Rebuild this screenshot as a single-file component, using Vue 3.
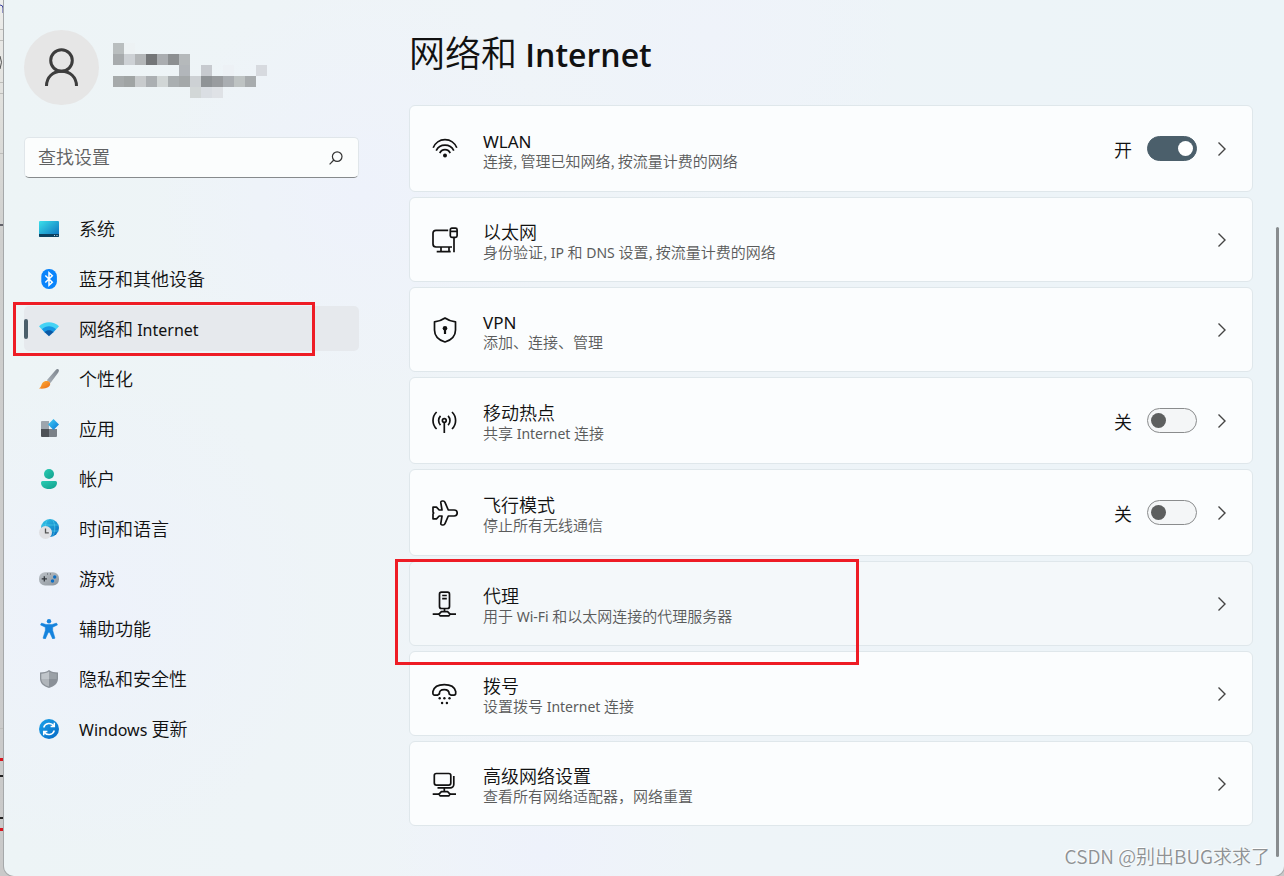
<script setup>
import { ref } from 'vue'

const query = ref('')

// Latin runs are set one step smaller than the Chinese text around them
const runs = (text) =>
  text
    .split(/( ?[A-Za-z-]+ ?)/)
    .filter((t) => t)
    .map((t) => ({ text: t, latin: /[A-Za-z]/.test(t) }))

const nav = [
  { id: 'system', label: '系统' },
  { id: 'bluetooth', label: '蓝牙和其他设备' },
  { id: 'network', label: '网络和 Internet', current: true },
  { id: 'personal', label: '个性化' },
  { id: 'apps', label: '应用' },
  { id: 'accounts', label: '帐户' },
  { id: 'time', label: '时间和语言' },
  { id: 'gaming', label: '游戏' },
  { id: 'access', label: '辅助功能' },
  { id: 'privacy', label: '隐私和安全性' },
  { id: 'update', label: 'Windows 更新' },
]

const cards = ref([
  { id: 'wlan', title: 'WLAN', sub: '连接, 管理已知网络, 按流量计费的网络', toggle: true, on: true },
  { id: 'ethernet', title: '以太网', sub: '身份验证, IP 和 DNS 设置, 按流量计费的网络' },
  { id: 'vpn', title: 'VPN', sub: '添加、连接、管理' },
  { id: 'hotspot', title: '移动热点', sub: '共享 Internet 连接', toggle: true, on: false },
  { id: 'airplane', title: '飞行模式', sub: '停止所有无线通信', toggle: true, on: false },
  { id: 'proxy', title: '代理', sub: '用于 Wi-Fi 和以太网连接的代理服务器', marked: true },
  { id: 'dialup', title: '拨号', sub: '设置拨号 Internet 连接' },
  { id: 'advanced', title: '高级网络设置', sub: '查看所有网络适配器，网络重置' },
])

const icons = {
  wlan: '<path d="M1.2 11.8A12.6 12.6 0 0 1 24.8 11.8M4.2 14.6A9.8 9.8 0 0 1 21.8 14.6M7.8 17.1A5.6 5.6 0 0 1 18.2 17.1"/><circle cx="13" cy="19.4" r="2" fill="currentColor" stroke="none"/>',
  ethernet: '<path d="M16.2 3.3H4A3 3 0 0 0 1 6.3V17a3 3 0 0 0 3 3h16M9 20v4.6M17 20v4.6M4.7 24.7h14M22 10.3v15"/><rect x="18.3" y="1.2" width="6.8" height="9.1" rx="1.6"/><path d="M18.3 4.4h6.8"/>',
  vpn: '<path d="M13 1c3 2.2 6.4 3.4 10.5 3.8v8.1c0 5.5-3.7 9.9-10.5 12.1C6.200 22.800 2.500 18.400 2.500 12.900V4.800C6.600 4.400 10 3.200 13 1z"/><circle cx="13" cy="11.300" r="2.300" fill="currentColor" stroke="none"/><path d="M13 11.500v5.500" stroke-width="2.200"/>',
  hotspot: '<circle cx="12.300" cy="12.500" r="1.900"/><path d="M12.300 14.500V25M8.500 7.800c-2.500 2.600-2.500 6.800 0 9.400M16.100 7.800c2.500 2.600 2.500 6.800 0 9.400M4.600 4c-4.800 4.700-4.800 12.300 0 17M20 4c4.800 4.700 4.800 12.300 0 17"/>',
  airplane: '<path d="M10.300 1h.9c.8 0 1.400.4 1.700 1.200L16.300 10h5.900c1.800 0 3 1.300 3 3s-1.200 3-3 3h-5.900l-3.400 7.800c-.3.800-.9 1.200-1.700 1.200h-.9c-1 0-1.600-.8-1.500-1.700L10 16H7.200l-2.700 2.800H1V14l.6-1L1 12V7.200h3.500L7.200 10H10L8.800 2.700C8.700 1.800 9.300 1 10.300 1z"/>',
  proxy: '<rect x="7.500" y="1.200" width="10" height="16.300" rx="2"/><path d="M10.200 4.500h4.600M10.200 7.700h4.600M12.500 17.500v3M.7 23.200h6.300M18 23.200h6"/><path d="M7 23.200l2.400-2.500h6.200l2.400 2.500-1.300 1.700H8.300z"/>',
  dialup: '<path d="M6.700 13.200l-1 .9H2.600C1.500 14.100.9 13.300.9 12.200V10.500C2 6 6.500 3.700 12.300 3.700S22.600 6 23.700 10.500v1.700c0 1.100-.6 1.900-1.700 1.900h-3.100l-1.700-1c0-3-1-4.500-4.900-4.500s-4.900 1.500-4.900 4.500z"/><g fill="currentColor" stroke="none"><circle cx="7.700" cy="17.200" r="1.200"/><circle cx="12.400" cy="17.200" r="1.200"/><circle cx="17.500" cy="17.200" r="1.200"/><circle cx="10.100" cy="22" r="1.200"/><circle cx="14.900" cy="22" r="1.200"/></g>',
  advanced: '<rect x="2.300" y="2.500" width="16.500" height="11.600" rx="2"/><path d="M21.800 5v8.300a3.600 3.600 0 0 1-3.600 3.600H5.500M12.300 17v3.500M.7 23.200h6.300M18 23.200h6"/><path d="M7 23.200l2.400-2.500h6.200l2.400 2.500-1.300 1.700H8.300z"/>',
}

const navIcons = {
  system: '<defs><linearGradient id="gs" x2="1" y2="1"><stop stop-color="#3be0ea"/><stop offset="1" stop-color="#0b6cbd"/></linearGradient></defs><rect y="2" width="20" height="16" rx="1" fill="url(#gs)"/><path d="M0 15h20v2a1 1 0 0 1-1 1H1a1 1 0 0 1-1-1z" fill="#0b3f5e"/><path d="M15 16h1v1h-1zM17.500 16h1v1h-1z" fill="#b9dcec"/>',
  bluetooth: '<rect x="2.300" width="15.600" height="20" rx="7.500" fill="#0a84fb"/><path d="M6.300 6.500l7 6.800-3.300 3V3.700l3.300 3-7 6.800" fill="none" stroke="#fff" stroke-width="1.500"/>',
  network: '<path d="M0 7.300C5.500 2 14.500 2 20 7.300L17.300 10.300H2.700z" fill="#45d3f5"/><path d="M2.900 10.200c4-3.900 10.200-3.900 14.200 0l-2.800 3.200H5.700z" fill="#1797e3"/><path d="M5.600 13.200c2.500-2.500 6.300-2.500 8.800 0L10 17.200z" fill="#0b59a5"/>',
  personal: '<defs><linearGradient id="gb" x1="1" x2="0" y2="1"><stop stop-color="#7d858e"/><stop offset="1" stop-color="#a9b0b8"/></linearGradient><linearGradient id="gp" x2="1" y2="1"><stop stop-color="#ffb43c"/><stop offset="1" stop-color="#ea6a12"/></linearGradient></defs><path d="M19.500.5c.8.800.4 2-.4 3.200L11.500 14 7.800 11.200 16.500 1.300C17.500.200 18.700-.3 19.500.500z" fill="url(#gb)"/><path d="M8 12c1.600-.2 3.200 1 3.200 2.800 0 3.400-4 5.400-11.200 4.700 2.500-1.500 2-3.500 3.200-5.300C4.200 12.600 6 12 8 12z" fill="url(#gp)"/>',
  apps: '<defs><linearGradient id="ga" x2="1" y2="1"><stop stop-color="#44cff5"/><stop offset="1" stop-color="#0676d6"/></linearGradient></defs><path d="M2 3a1 1 0 0 1 1-1h7v8H2z" fill="#9da5ad"/><path d="M2 10h8v8H3a1 1 0 0 1-1-1z" fill="#4d5156"/><path d="M10 10h8v7a1 1 0 0 1-1 1h-7z" fill="#7b8188"/><path d="M14.500 0L20 5.500 14.500 11 9 5.500z" fill="url(#ga)"/>',
  accounts: '<defs><linearGradient id="gc" x2="1" y2="1"><stop stop-color="#29cdb4"/><stop offset="1" stop-color="#129e8c"/></linearGradient></defs><circle cx="10" cy="5" r="5" fill="url(#gc)"/><path d="M3.500 12h13A1.500 1.500 0 0 1 18 13.500C18 17.500 15 20 10 20s-8-2.500-8-6.500A1.500 1.500 0 0 1 3.500 12z" fill="url(#gc)"/>',
  time: '<defs><linearGradient id="gt" x2="1" y2="1"><stop stop-color="#33c8e8"/><stop offset="1" stop-color="#0868bd"/></linearGradient></defs><circle cx="11" cy="9" r="9" fill="url(#gt)"/><path d="M2.700 6h16.800M4 12h16M8.500.5c-3 5-3 12 0 17M13.500.5c3 5 3 12 0 17" fill="none" stroke="#5fdcf3" stroke-width=".7" opacity=".7"/><circle cx="6.500" cy="13.500" r="6.500" fill="#e0e0e3"/><path d="M6.500 9.500v4.300h3.300" fill="none" stroke="#555" stroke-width="1.300"/>',
  gaming: '<defs><linearGradient id="gg" x2="1" y2="1"><stop stop-color="#bcc2c8"/><stop offset="1" stop-color="#8e959c"/></linearGradient></defs><rect y="3.300" width="20" height="13.200" rx="6" fill="url(#gg)"/><path d="M5.300 7.300v5.200M2.700 9.900h5.200" stroke="#34393e" stroke-width="1.300"/><path d="M8 4.500h1v1H8zM11 4.500h1v1h-1z" fill="#50565c"/><circle cx="15.700" cy="8" r="1.700" fill="#0d6fc4"/><circle cx="13.500" cy="12" r="1.700" fill="#0d6fc4"/>',
  access: '<circle cx="10" cy="2.200" r="2.200" fill="#1583dd"/><path d="M2.500 4.100L7 5.500h6l4.500-1.400 1 1.800-4.800 2.300v3.300l2.300 7.700-2.300.8-3-6.500h-1.400l-3 6.500-2.300-.8 2.300-7.700V8.200L1.500 5.900z" fill="#1583dd" stroke="#1583dd" stroke-width=".5" stroke-linejoin="round"/>',
  privacy: '<path d="M10 1c2.500 1.800 5.500 2.400 9 2.600v6C19 14.500 15.500 17.500 10 19 4.500 17.500 1 14.500 1 9.600v-6C4.500 3.400 7.500 2.800 10 1z" fill="#8b9198"/><path d="M10 2.500V10H2.300V4.800C5.200 4.600 7.800 3.900 10 2.500z" fill="#c0c5ca"/><path d="M10 2.500V10h7.700V4.800C14.800 4.600 12.200 3.900 10 2.500z" fill="#9ba1a7"/><path d="M2.300 10H10v7.600C5.500 16.300 2.500 13.800 2.300 10z" fill="#b0b5ba"/><path d="M17.700 10H10v7.600c4.500-1.300 7.500-3.800 7.700-7.600z" fill="#8a9097"/>',
  update: '<defs><linearGradient id="gu" x2="1" y2="1"><stop stop-color="#1ca4ea"/><stop offset="1" stop-color="#0668c4"/></linearGradient></defs><circle cx="10" cy="10" r="10" fill="url(#gu)"/><path d="M4.700 8.500A5.600 5.600 0 0 1 14.800 7M15.300 11.500A5.600 5.600 0 0 1 5.200 13M15.300 3.800v3.700h-3.700M4.700 16.200v-3.700h3.700" fill="none" stroke="#fff" stroke-width="1.500"/>',
}

// Pixelated account name: column, row, colour
const mosaic = [
  [0, 0, '#b9bebf'], [1, 0, '#edf2f4'],
  [0, 1, '#a7abad'], [1, 1, '#cdd1d5'], [2, 1, '#b3b6b8'], [3, 1, '#747678'], [4, 1, '#aaadb0'], [5, 1, '#8c8f91'], [6, 1, '#b5b9bb'],
  [6, 2, '#b2b6ba'], [8, 2, '#c7cacf'], [10, 2, '#edf1f5'], [13, 2, '#d7dadf'],
  [0, 3, '#a6aaab'], [1, 3, '#a0a4a4'], [2, 3, '#c8cbcd'], [3, 3, '#abafb2'], [4, 3, '#d1d6d6'], [5, 3, '#aaafb1'], [6, 3, '#a4a8a9'],
  [7, 3, '#cdd1d4'], [8, 3, '#8f9396'], [9, 3, '#999c9f'], [10, 3, '#aaaeb2'], [11, 3, '#bec3c3'], [12, 3, '#a8acae'],
  [7, 4, '#d2d7d7'], [8, 4, '#dadee3'], [9, 4, '#dfe2e6'],
]
</script>

<template>
  <div class="desktop">
    <svg class="behind" width="4" height="876" aria-hidden="true">
      <path d="M0 29.500h4M0 40.500h4M0 82.500h4M0 93.500h4M0 153.500h4M0 728.500h4" stroke="#bdbdba" />
      <path d="M0 225h4" stroke="#62626a" stroke-width="2" />
      <path d="M0 759.500h4M0 829.500h4" stroke="#d8161f" stroke-width="3" />
      <path d="M0 776h4M0 818h4" stroke="#222" stroke-width="2" />
      <path d="M0 56q3 6 0 13" fill="none" stroke="#555" stroke-width="1" />
      <path d="M0 5q3 0 3 3v5" fill="none" stroke="#3a3f9c" stroke-width="1" />
    </svg>

    <div class="window">
      <aside class="side">
        <div class="account">
          <svg class="avatar" viewBox="0 0 75 75" aria-label="帐户图片">
            <circle cx="37.500" cy="37.500" r="37.500" fill="#e6e6e6" />
            <g fill="none" stroke="#3d3d3d" stroke-width="3">
              <circle cx="37.500" cy="30.500" r="10.800" />
              <path d="M22.500 56C22.500 47 29 41.300 37.500 41.300S52.500 47 52.500 56" />
            </g>
          </svg>
          <svg class="mosaic" viewBox="0 0 154 55" aria-hidden="true" shape-rendering="crispEdges">
            <rect v-for="([c, r, fill], i) in mosaic" :key="i" :x="c * 11" :y="r * 11" width="11" height="11" :fill="fill" />
          </svg>
        </div>

        <div class="search">
          <input v-model="query" type="text" placeholder="查找设置" aria-label="查找设置" />
          <svg viewBox="0 0 14 14" aria-hidden="true">
            <circle cx="8.200" cy="5.600" r="4.800" />
            <path d="M4.800 9L.6 13.300" />
          </svg>
        </div>

        <nav>
          <a v-for="item in nav" :key="item.id" href="#" :class="{ current: item.current }">
            <svg viewBox="0 0 20 20" aria-hidden="true" v-html="navIcons[item.id]"></svg>
            <span class="label"><span v-for="(r, i) in runs(item.label)" :key="i" :class="{ latin: r.latin }">{{ r.text }}</span></span>
            <i v-if="item.current" class="mark"></i>
          </a>
        </nav>
      </aside>

      <main>
        <h1>网络和<span>&nbsp;Internet</span></h1>
        <div class="cards">
          <section v-for="card in cards" :key="card.id" class="card" :class="{ tall: card.toggle, hover: card.marked }">
            <a class="link" href="#">
              <svg viewBox="0 0 26 26" aria-hidden="true" v-html="icons[card.id]"></svg>
              <span class="text">
                <span class="title"><span v-for="(r, i) in runs(card.title)" :key="i" :class="{ latin: r.latin }">{{ r.text }}</span></span>
                <span class="sub"><span v-for="(r, i) in runs(card.sub)" :key="i" :class="{ latin: r.latin }">{{ r.text }}</span></span>
              </span>
            </a>
            <label v-if="card.toggle" class="toggle">
              <span>{{ card.on ? '开' : '关' }}</span>
              <input v-model="card.on" type="checkbox" :aria-label="card.title" />
            </label>
            <button type="button" class="more" :aria-label="card.title">
              <svg viewBox="0 0 10 16" aria-hidden="true"><path d="M1.500 1.500L8 8l-6.500 6.500" /></svg>
            </button>
            <i v-if="card.marked" class="mark"></i>
          </section>
        </div>
      </main>
      <div class="thumb"></div>
      <div class="watermark">CSDN @别出BUG求求了</div>
    </div>
  </div>
</template>

<style>
html,
body {
  background: #cfcfce;
}
</style>

<style scoped>
* {
  box-sizing: border-box;
}
.desktop {
  position: relative;
  display: flex;
  min-height: 100vh;
  padding-left: 4px;
  overflow: hidden;
  background: linear-gradient(#eeeeec, #dededb 120px, #cfcfce 240px, #c9c9c9);
  font-family: "Noto Sans CJK SC", sans-serif;
  font-size: 18px;
  font-weight: 350;
  color: #111;
}
.behind {
  position: absolute;
  left: 0;
  top: 0;
}
.window {
  position: relative;
  flex: 1;
  display: flex;
  gap: 50px;
  padding: 30px 31px 0 20px;
  border-radius: 0 0 10px 10px;
  box-shadow: 0 0 0 1px #a5a8aa;
  background:
    radial-gradient(circle at 28% 22%, #eef2fb, transparent 18%),
    radial-gradient(circle at 6% 70%, #eef2fb, transparent 18%),
    radial-gradient(circle at 42% 97%, #eef2fb, transparent 14%),
    radial-gradient(circle at 55% 4%, #eff3fa, transparent 18%),
    linear-gradient(90deg, #edf4f6, #eff4f8 40%, #ecf4f8);
}
.side {
  width: 335px;
  flex: none;
}
.account {
  display: flex;
  align-items: center;
  gap: 14px;
}
.avatar {
  width: 75px;
  height: 75px;
}
.mosaic {
  width: 154px;
  height: 55px;
  margin-top: 5px;
}
.search {
  display: flex;
  align-items: center;
  height: 41px;
  margin-top: 32px;
  padding: 0 15px 0 13px;
  border: 1px solid #e0e6ea;
  border-bottom-color: #868a8c;
  border-radius: 5px;
  background: #fbfdfd;
}
.search input {
  flex: 1;
  min-width: 0;
  padding: 0 0 3px;
  border: 0;
  outline: 0;
  background: none;
  font: inherit;
  color: #1b1b1b;
}
.search input::placeholder {
  color: #5f6162;
  opacity: 1;
}
.search svg {
  width: 14px;
  height: 14px;
  fill: none;
  stroke: #333;
  stroke-width: 1.2;
}
nav {
  display: flex;
  flex-direction: column;
  gap: 5px;
  margin-top: 28px;
}
nav a {
  position: relative;
  display: flex;
  align-items: center;
  gap: 20px;
  height: 45px;
  padding-left: 15px;
  border-radius: 5px;
  color: inherit;
  text-decoration: none;
}
nav svg {
  width: 20px;
  height: 20px;
}
.label {
  padding-bottom: 2px;
}
nav .current {
  background: #e6e9ed;
}
nav .current::before {
  content: "";
  position: absolute;
  left: 0;
  top: 13px;
  width: 4px;
  height: 20px;
  border-radius: 2px;
  background: #4b5f6b;
}
.latin {
  font-family: "Noto Sans", sans-serif;
  font-size: 16px;
  font-weight: 400;
  line-height: 1;
}
.mark {
  position: absolute;
  z-index: 1;
  border: 3px solid #ee1c25;
  pointer-events: none;
}
nav .mark {
  left: -11px;
  top: -4px;
  width: 302px;
  height: 54px;
}
main {
  flex: 1;
  min-width: 0;
}
h1 {
  margin: 0;
  font-size: 36px;
  font-weight: 350;
  line-height: 42px;
}
h1 span {
  font-family: "Open Sans", sans-serif;
  font-size: 32px;
  font-weight: 600;
  line-height: 1;
}
.cards {
  display: flex;
  flex-direction: column;
  gap: 5px;
  margin-top: 33px;
}
.card {
  position: relative;
  display: flex;
  align-items: center;
  height: 85px;
  padding: 0 25px 0 22px;
  border: 1px solid #dfe7eb;
  border-radius: 6px;
  background: #fbfdfe;
}
.card.tall {
  height: 87px;
}
.card.hover {
  background: #f4f8fa;
}
.link {
  flex: 1;
  display: flex;
  align-items: center;
  gap: 25px;
  color: inherit;
  text-decoration: none;
}
.link svg {
  width: 26px;
  height: 26px;
  fill: none;
  stroke: currentColor;
  stroke-width: 1.7;
  stroke-linejoin: round;
}
.text {
  display: flex;
  flex-direction: column;
  padding-top: 3px;
}
.title {
  line-height: 22px;
}
.title .latin {
  font-size: 17px;
}
.sub {
  font-size: 15px;
  line-height: 20px;
  color: #5a5b5b;
}
.sub .latin {
  font-size: 14px;
}
.toggle {
  display: flex;
  align-items: center;
  gap: 15px;
}
.toggle input {
  appearance: none;
  display: flex;
  align-items: center;
  width: 50px;
  height: 25px;
  margin: 0;
  padding: 0 3px;
  border: 1px solid #8a8c8d;
  border-radius: 13px;
  background: #f4f6f7;
}
.toggle input::before {
  content: "";
  width: 15px;
  height: 15px;
  border-radius: 50%;
  background: #5d5f5f;
}
.toggle input:checked {
  justify-content: flex-end;
  border-color: #4b5f6b;
  background: #4b5f6b;
}
.toggle input:checked::before {
  background: #fff;
}
.more {
  display: flex;
  margin-left: 20px;
  padding: 0;
  border: 0;
  background: none;
}
.more svg {
  width: 10px;
  height: 16px;
  fill: none;
  stroke: #444;
  stroke-width: 1.4;
}
.card .mark {
  left: -15px;
  top: -3px;
  width: 464px;
  height: 106px;
}
.thumb {
  position: absolute;
  right: 5px;
  top: 227px;
  bottom: 19px;
  width: 3px;
  border-radius: 2px;
  background: #888c8f;
}
.watermark {
  position: absolute;
  right: 14px;
  bottom: 6px;
  font-size: 19px;
  line-height: 28px;
  color: #8f9294;
  text-shadow: -1px -1px 0 #fff;
}
</style>
